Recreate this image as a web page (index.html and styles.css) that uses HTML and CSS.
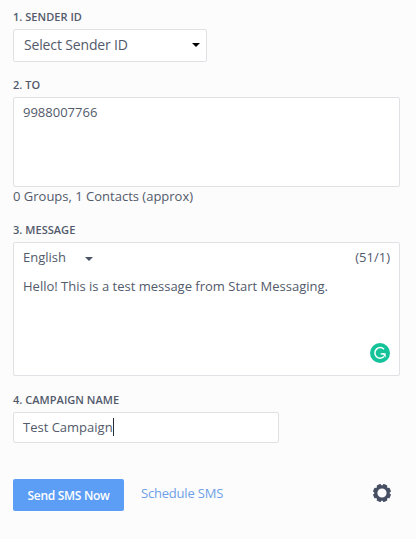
FILE: index.html
```html
<!DOCTYPE html>
<html lang="en">
<head>
    <meta charset="UTF-8">
    <meta name="viewport" content="width=device-width, initial-scale=1.0">
    <title>Send SMS</title>
    <link rel="stylesheet" href="styles.css">
</head>
<body>
    <form class="sms-form" id="sms-form">
        <div class="field sender-field">
            <div class="label">1. SENDER ID</div>
            <div class="box select">
                <span class="select-text">Select Sender ID</span>
                <span class="arrow"></span>
            </div>
        </div>

        <div class="field to-field">
            <div class="label">2. TO</div>
            <div class="box recipients"><span class="recipients-text">9988007766</span></div>
            <div class="summary"><span class="summary-text">0 Groups, 1 Contacts (approx)</span></div>
        </div>

        <div class="field message-field">
            <div class="label">3. MESSAGE</div>
            <div class="box message">
                <div class="message-header">
                    <span class="language">English</span>
                    <span class="arrow small"></span>
                    <span class="counter">(51/1)</span>
                </div>
                <div class="message-body"><span class="message-text">Hello! This is a test message from Start Messaging.</span></div>
                <svg class="checker" width="20" height="20" viewBox="0 0 20 20">
                    <circle cx="10" cy="10" r="10" fill="#15c39a"/>
                    <path d="M14 6.2A5.3 5.3 0 1 0 14 13.6" fill="none" stroke="#fff" stroke-width="1.5"/>
                    <path d="M10.6 10.9H14.2" fill="none" stroke="#fff" stroke-width="1.4"/>
                    <path d="M12 10.2H15.7V14.8Z" fill="#fff"/>
                </svg>
            </div>
        </div>

        <div class="field campaign-field">
            <div class="label">4. CAMPAIGN NAME</div>
            <div class="box campaign"><span class="campaign-text">Test Campaign</span><span class="caret"></span></div>
        </div>

        <div class="actions">
            <button type="submit" class="send"><span class="send-text">Send SMS Now</span></button>
            <a class="schedule">Schedule SMS</a>
            <svg class="settings" width="20" height="20" viewBox="0 0 20 20">
                <circle cx="10" cy="10" r="6.2" fill="none" stroke="#474f63" stroke-width="3.2"/>
                <g fill="#474f63">
                    <rect id="tooth" x="7.7" y="1" width="4.6" height="3" rx=".8" transform="rotate(22.5 10 10)"/>
                    <use href="#tooth" transform="rotate(45 10 10)"/>
                    <use href="#tooth" transform="rotate(90 10 10)"/>
                    <use href="#tooth" transform="rotate(135 10 10)"/>
                    <use href="#tooth" transform="rotate(180 10 10)"/>
                    <use href="#tooth" transform="rotate(225 10 10)"/>
                    <use href="#tooth" transform="rotate(270 10 10)"/>
                    <use href="#tooth" transform="rotate(315 10 10)"/>
                </g>
            </svg>
        </div>
    </form>
</body>
</html>
```
FILE: styles.css
```css
* {
    box-sizing: border-box;
}
body {
    margin: 0;
    background-color: #fcfcfc;
    color: #525a6b;
    font-family: "Open Sans", sans-serif;
    font-size: 13px;
    line-height: 18px;
}
.sms-form {
    padding: 9px 16px 0 13px;
}
.label {
    height: 20px;
    font-size: 11px;
    font-weight: 600;
    letter-spacing: 0.04px;
    line-height: 16px;
}
.box {
    background: #fff;
    border: 1px solid #dfe1e4;
    border-radius: 2px;
}
.arrow {
    width: 0;
    height: 0;
    border-left: 4px solid transparent;
    border-right: 4px solid transparent;
    border-top: 4px solid #000;
}
.arrow.small {
    margin: 3px 0 0 19px;
    border-top-color: #4b5366;
}

/* Sender */
.select {
    display: flex;
    align-items: center;
    justify-content: space-between;
    width: 194px;
    height: 33px;
    padding: 0 6px 2px 10px;
    font-size: 14px;
}
.select-text {
    letter-spacing: -0.15px;
}

/* Recipients */
.to-field {
    margin-top: 15px;
}
.recipients {
    height: 90px;
    padding: 5px 9px;
}
.summary {
    height: 18px;
}

/* Message */
.message-field {
    margin-top: 17px;
}
.message {
    position: relative;
    height: 134px;
    padding: 5px 9px;
}
.message-header {
    display: flex;
    align-items: center;
}
.counter {
    margin-left: auto;
}
.message-body {
    margin-top: 11px;
}
.checker {
    position: absolute;
    right: 9px;
    bottom: 12px;
}

/* Campaign */
.campaign-field {
    margin-top: 16px;
}
.campaign {
    display: flex;
    align-items: center;
    width: 266px;
    height: 31px;
    padding: 0 9px 2px;
}
.caret {
    width: 1px;
    height: 18px;
    background: #222b3c;
}

.actions {
    display: flex;
    align-items: center;
    margin-top: 36px;
}
.send {
    width: 111px;
    height: 32px;
    padding: 1px 0 0;
    background-color: #5c9df5;
    color: #fff;
    border: none;
    border-radius: 2px;
    font-family: inherit;
    font-size: 12px;
    font-weight: 600;
    letter-spacing: -0.3px;
    cursor: pointer;
}
.schedule {
    margin: 0 0 4px 17px;
    color: #6e9fe8;
    letter-spacing: -0.2px;
}
.settings {
    margin: 0 8px 4px auto;
}
```
